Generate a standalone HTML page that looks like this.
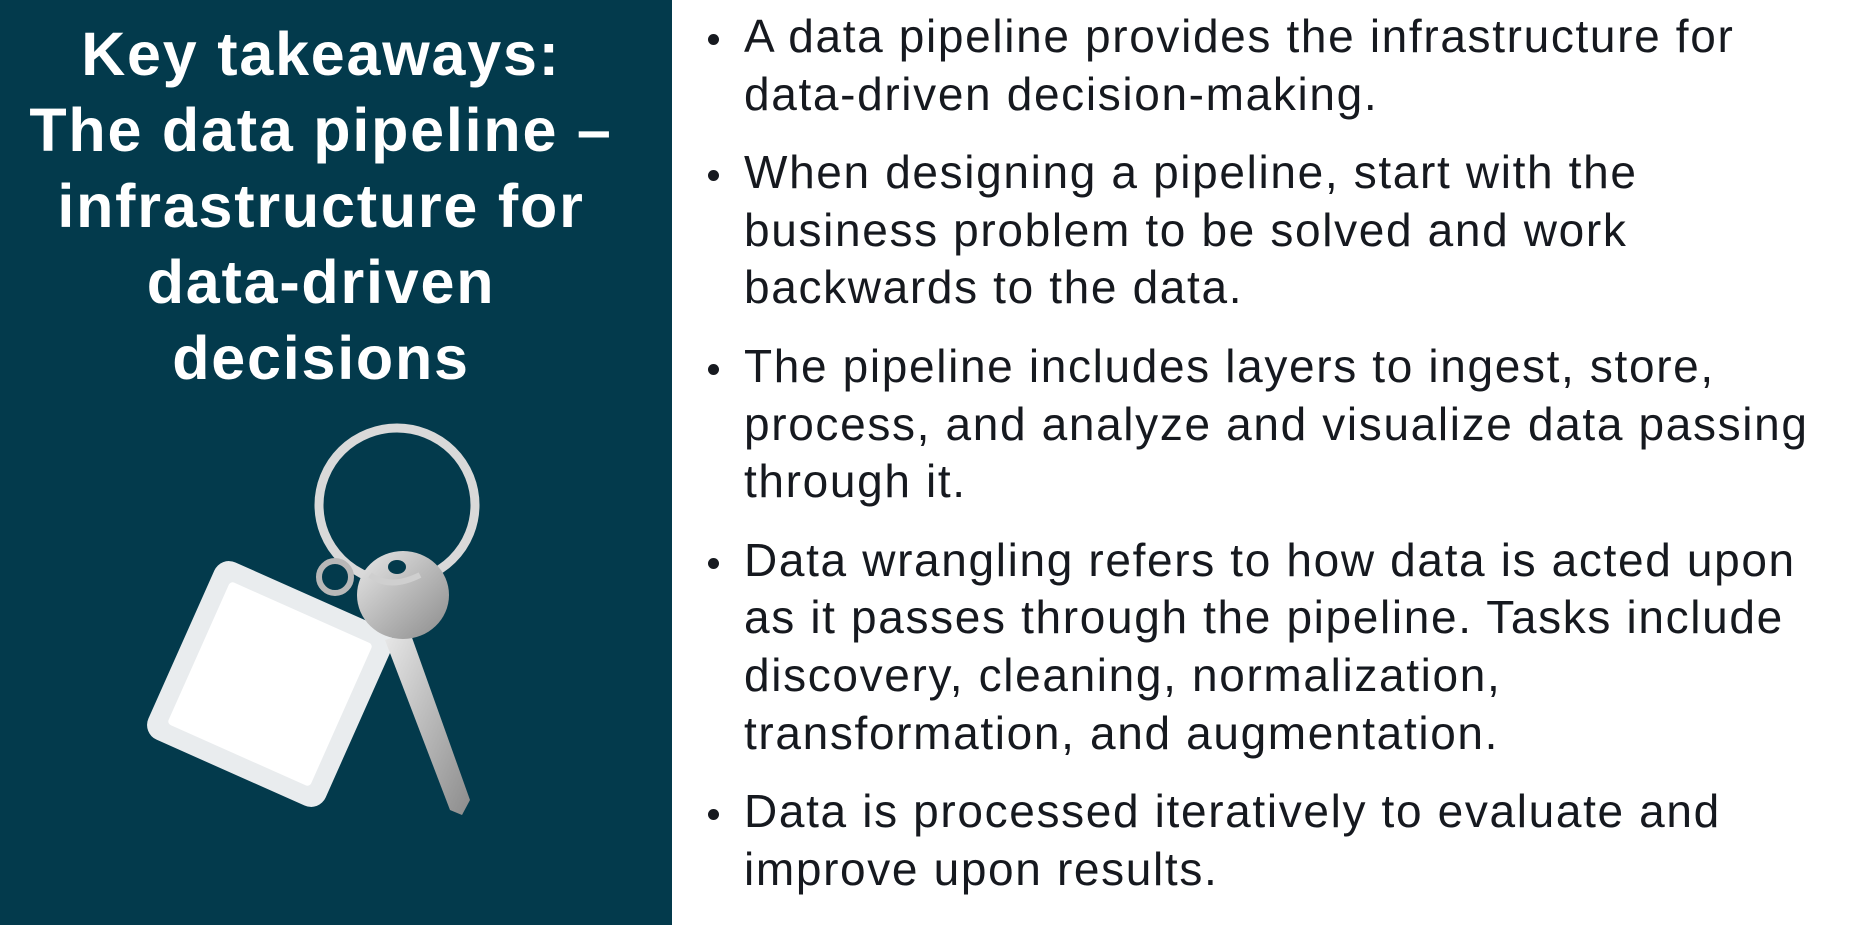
<!DOCTYPE html>
<html><head><meta charset="utf-8"><style>
html,body{margin:0;padding:0;width:1863px;height:925px;overflow:hidden;background:#fff;}
.left{position:absolute;left:0;top:0;width:672px;height:925px;background:#033a4c;}
.title{position:absolute;left:0;top:16px;width:642px;text-align:center;color:#fff;font-family:"Liberation Sans",sans-serif;font-weight:bold;font-size:61px;line-height:76px;letter-spacing:1.8px;}
ul{position:absolute;left:703px;top:8px;margin:0;padding:0;list-style:none;font-family:"Liberation Sans",sans-serif;font-size:46px;line-height:57.6px;color:#16191f;width:1150px;letter-spacing:1.65px;white-space:nowrap;}
li{position:relative;padding-left:41px;margin-bottom:21px;}
li:before{content:"";position:absolute;left:5px;top:26px;width:11px;height:11px;border-radius:50%;background:#16191f;}
svg{position:absolute;left:0;top:0;}
</style></head><body>
<div class="left">
<div class="title">Key takeaways:<br>The data pipeline –<br>infrastructure for<br>data-driven<br>decisions</div>
<svg width="672" height="925" viewBox="0 0 672 925">
<defs>
<linearGradient id="m" x1="0" y1="0" x2="1" y2="1"><stop offset="0" stop-color="#e8e8e8"/><stop offset="0.5" stop-color="#b9b9b9"/><stop offset="1" stop-color="#8c8c8c"/></linearGradient>
</defs>
<ellipse cx="397" cy="505" rx="78" ry="77" fill="none" stroke="#d9d9d9" stroke-width="9"/>
<g transform="rotate(24 270 684)">
<rect x="173" y="587" width="194" height="194" rx="16" fill="#e9ecee"/>
<rect x="192" y="606" width="156" height="156" rx="4" fill="#fff"/>
</g>
<circle cx="335" cy="577" r="16" fill="none" stroke="#b8b8b8" stroke-width="6"/>
<path d="M385 640 L410 632 L470 800 L462 815 L450 810 Z" fill="url(#m)"/>
<ellipse cx="403" cy="595" rx="46" ry="44" fill="url(#m)"/>
<ellipse cx="397" cy="567" rx="9" ry="7" fill="#033a4c"/>
<path d="M370 575 Q390 590 420 575" fill="none" stroke="#cfcfcf" stroke-width="6"/>
</svg>
</div>
<ul>
<li>A data pipeline provides the infrastructure for<br>data-driven decision-making.</li>
<li>When designing a pipeline, start with the<br>business problem to be solved and work<br>backwards to the data.</li>
<li>The pipeline includes layers to ingest, store,<br>process, and analyze and visualize data passing<br>through it.</li>
<li>Data wrangling refers to how data is acted upon<br>as it passes through the pipeline. Tasks include<br>discovery, cleaning, normalization,<br>transformation, and augmentation.</li>
<li>Data is processed iteratively to evaluate and<br>improve upon results.</li>
</ul>
</body></html>
